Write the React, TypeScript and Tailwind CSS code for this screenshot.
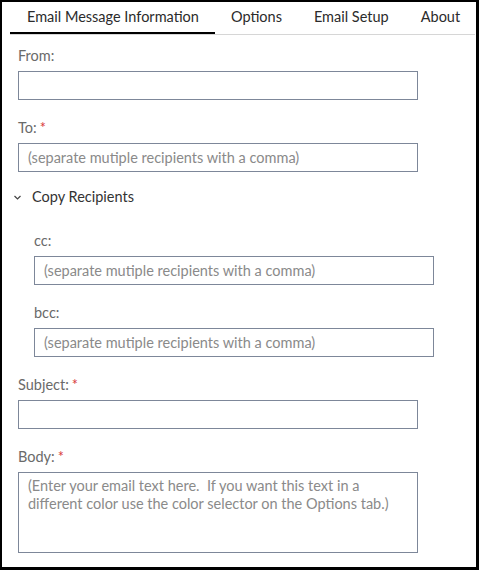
import React from 'react';

const FONT = { fontFamily: 'Lato, "Open Sans", sans-serif' };

function Label({ text, required }: { text: string; required?: boolean }) {
  return (
    <div className="h-5 leading-5 text-[14.5px] text-[#6a6a6a] mb-[5px]">
      {text}
      {required && <span className="text-[#d83a3a] ml-[3px]">*</span>}
    </div>
  );
}

function Field({
  label,
  required,
  placeholder,
  className,
}: {
  label: string;
  required?: boolean;
  placeholder?: string;
  className?: string;
}) {
  return (
    <div className={className}>
      <Label text={label} required={required} />
      <div className="w-[400px] h-[29px] border border-[#7d8799] flex items-center px-[9px] text-[14.5px] text-[#8a8a8a] whitespace-nowrap">
        {placeholder}
      </div>
    </div>
  );
}

const tabs = ['Email Message Information', 'Options', 'Email Setup', 'About'];

export default function App() {
  return (
    <div
      className="w-[479px] h-[570px] bg-white border-black border-l-2 border-t-2 border-r-[3px] border-b-[3px] overflow-hidden"
      style={FONT}
    >
      {/* tabs */}
      <div className="ml-2 mr-px flex border-b border-[#d6d6d6] h-[33px] overflow-hidden">
        {tabs.map((t, i) => (
          <div
            key={t}
            className={
              i === 0
                ? 'shrink-0 whitespace-nowrap pl-[17px] pr-4 h-[33px] leading-[30px] text-[14.5px] text-[#2b2b2b] border-b-[3px] border-black'
                : 'shrink-0 whitespace-nowrap px-4 h-[33px] leading-[30px] text-[14.5px] text-[#2b2b2b]'
            }
          >
            {t}
          </div>
        ))}
      </div>

      <div className="pl-4 pt-[11px]">
        <Field label="From:" />
        <Field
          className="mt-[18px]"
          label="To:"
          required
          placeholder="(separate mutiple recipients with a comma)"
        />

        <div className="mt-[15px] h-5 flex items-center text-[14.5px] text-[#333]">
          <svg width="9" height="7" viewBox="0 0 9 7" className="ml-[-5px] mr-[10px] mt-px">
            <path d="M1.5 2 L4.5 5 L7.5 2" fill="none" stroke="#444" strokeWidth="1.2" />
          </svg>
          Copy Recipients
        </div>

        <div className="pl-4 mt-[24px]">
          <Field label="cc:" placeholder="(separate mutiple recipients with a comma)" />
          <Field
            className="mt-[18px]"
            label="bcc:"
            placeholder="(separate mutiple recipients with a comma)"
          />
        </div>

        <Field className="mt-[18px]" label="Subject:" required />

        <div className="mt-[18px]">
          <Label text="Body:" required />
          <div className="w-[400px] h-[81px] border border-[#7d8799] px-[9px] pt-[4px] text-[14.5px] leading-[18px] text-[#8a8a8a]">
            (Enter your email text here.&nbsp; If you want this text in a different color use the color selector on the Options tab.)
          </div>
        </div>
      </div>
    </div>
  );
}
